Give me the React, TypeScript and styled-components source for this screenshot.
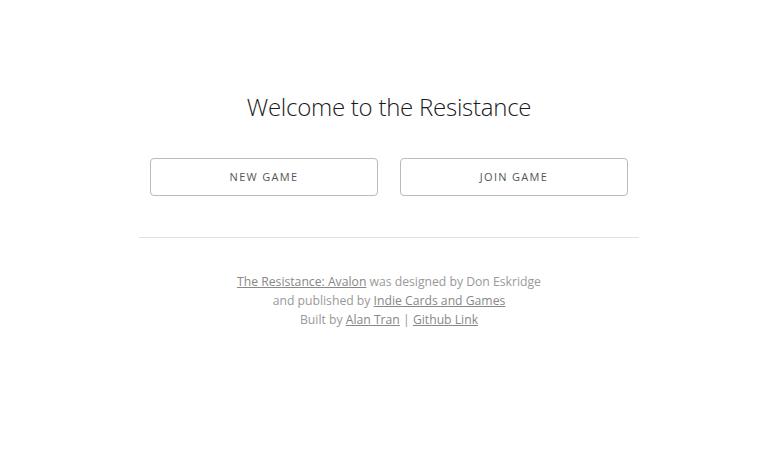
import React from "react";
import styled, { createGlobalStyle } from "styled-components";

const Global = createGlobalStyle`
  html, body { margin: 0; padding: 0; background: #fff; }
  body { font-family: "Open Sans", "Liberation Sans", sans-serif; color: #222; }
`;

const Page = styled.div`
  width: 500px;
  margin: 0 auto;
  padding-top: 92px;
  display: flex;
  flex-direction: column;
`;

const Title = styled.h1`
  margin: 0;
  font-family: "Open Sans", sans-serif;
  font-weight: 300;
  font-size: 24px;
  line-height: 29px;
  letter-spacing: -0.25px;
  text-align: center;
  color: #1a1a1a;
`;

const ButtonRow = styled.div`
  display: grid;
  grid-template-columns: 1fr 1fr;
  gap: 22px;
  padding: 0 11px;
  margin-top: 37px;
`;

const Button = styled.button`
  height: 38px;
  box-sizing: border-box;
  border: 1px solid #bbb;
  border-radius: 4px;
  background: transparent;
  color: #555;
  font-family: "Open Sans", sans-serif;
  font-size: 11px;
  font-weight: 400;
  letter-spacing: 1.3px;
  text-transform: uppercase;
  cursor: pointer;
  padding: 0 30px 1px;
`;

const Rule = styled.hr`
  margin: 41px 0 0;
  border: 0;
  border-top: 1px solid #e1e1e1;
`;

const Footer = styled.div`
  margin-top: 34px;
  text-align: center;
  font-size: 12.2px;
  line-height: 19px;
  color: #999;
`;

const Link = styled.a`
  color: #888;
  text-decoration: underline;
`;

export default function App() {
  return (
    <>
      <Global />
      <Page>
        <Title>Welcome to the Resistance</Title>
        <ButtonRow>
          <Button>New Game</Button>
          <Button>Join Game</Button>
        </ButtonRow>
        <Rule />
        <Footer>
          <Link href="#">The Resistance: Avalon</Link> was designed by Don Eskridge
          <br />
          and published by <Link href="#">Indie Cards and Games</Link>
          <br />
          Built by <Link href="#">Alan Tran</Link> | <Link href="#">Github Link</Link>
        </Footer>
      </Page>
    </>
  );
}
